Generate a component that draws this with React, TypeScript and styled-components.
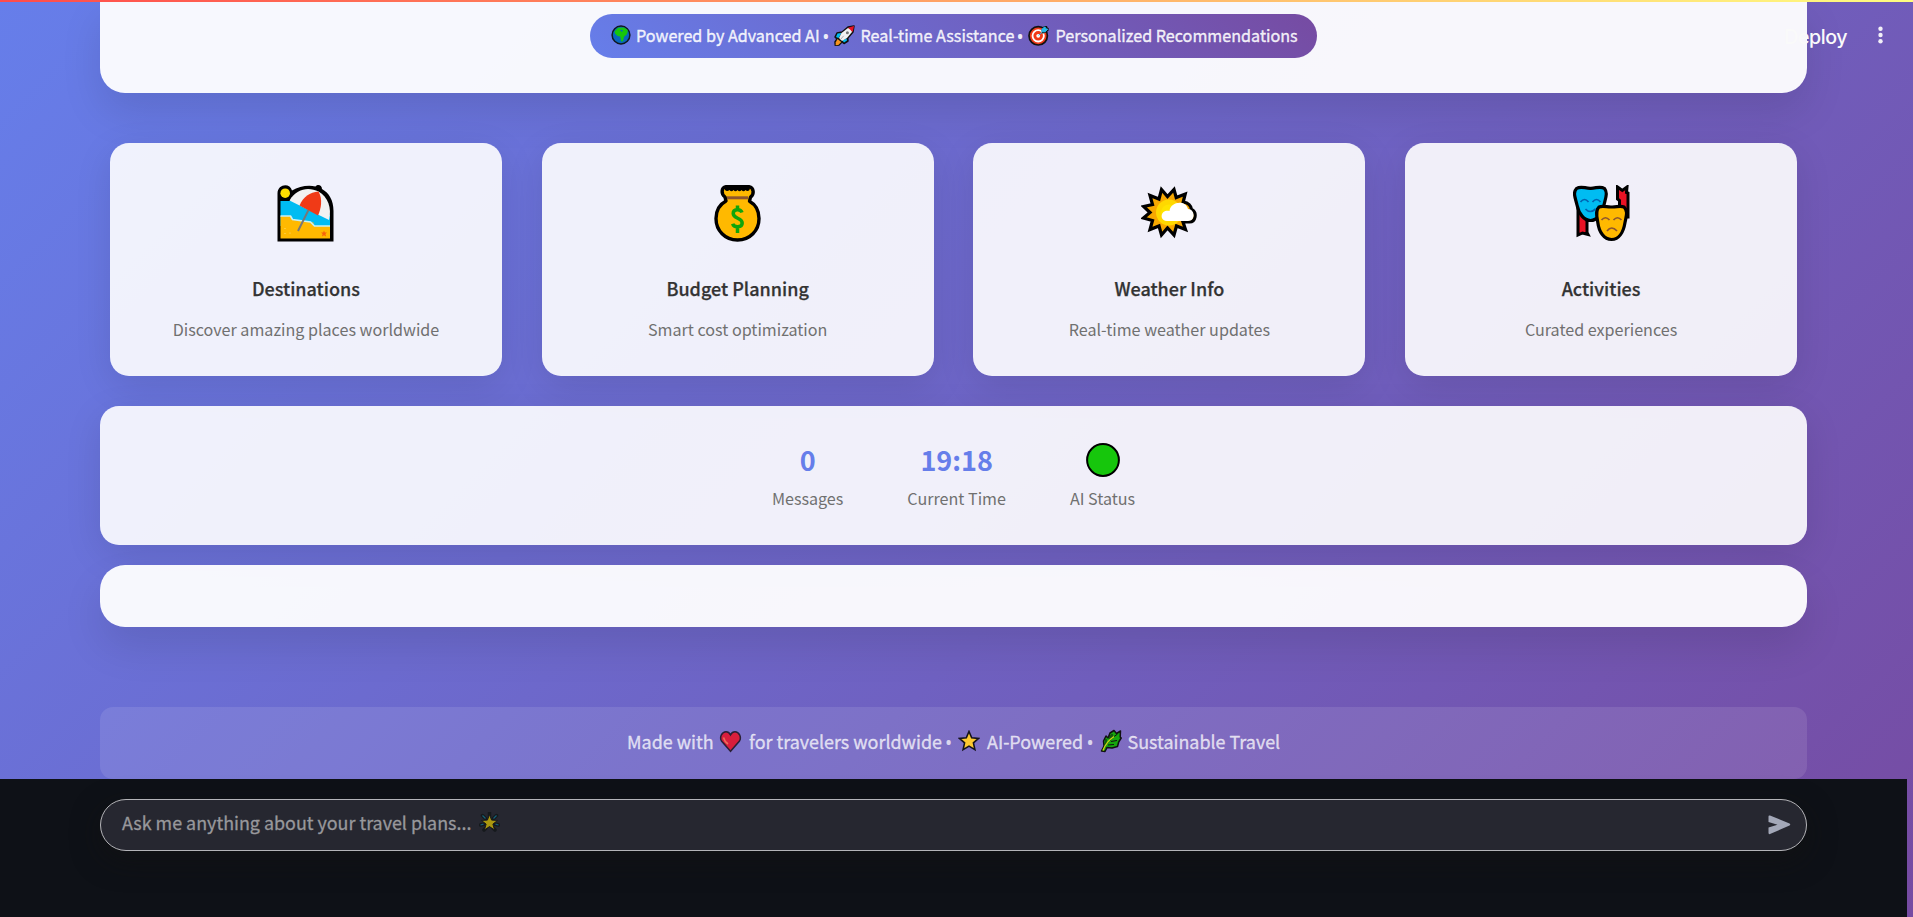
import React from "react";
import styled, { createGlobalStyle } from "styled-components";

const GlobalStyle = createGlobalStyle`
  html, body { margin: 0; padding: 0; overflow: hidden; }
  * { box-sizing: border-box; }
`;

const Page = styled.div`
  position: relative;
  height: 917px;
  overflow: hidden;
  display: flex;
  flex-direction: column;
  background: linear-gradient(135deg, #667eea 0%, #764ba2 100%);
  font-family: "Noto Sans CJK SC", "Noto Sans", sans-serif;
`;

const TopLine = styled.div`
  position: absolute;
  top: 0;
  left: 0;
  right: 0;
  height: 2px;
  background: linear-gradient(90deg, #ff4b4b, #fffd80);
  z-index: 2;
`;

const Toolbar = styled.div`
  position: absolute;
  top: 0;
  right: 29px;
  height: 70px;
  display: flex;
  align-items: center;
  gap: 30px;
  z-index: 1;
`;

const Deploy = styled.span`
  padding-top: 3px;
  font: 500 19.6px/24px Inter, sans-serif;
  letter-spacing: -0.45px;
  color: #fafafa;
`;

const Content = styled.main`
  flex: 0 0 779px;
  padding: 0 106px 0 100px;
  display: flex;
  flex-direction: column;
  overflow: hidden;
`;

const Hero = styled.section`
  flex: 0 0 92.5px;
  padding-top: 13.5px;
  display: flex;
  justify-content: center;
  align-items: flex-start;
  background: rgba(255, 255, 255, 0.95);
  border-radius: 0 0 25px 25px;
  box-shadow: 0 20px 40px rgba(0, 0, 0, 0.1);
`;

const Line = styled.span<{ $size: number; $stroke?: number }>`
  white-space: pre;
  font-size: ${(p) => p.$size}px;
  -webkit-text-stroke: ${(p) => p.$stroke ?? 0}px currentColor;
`;

const Pill = styled.div`
  width: 727px;
  height: 44px;
  padding: 0 0 1px 21px;
  display: flex;
  align-items: center;
  border-radius: 22px;
  color: rgba(255, 255, 255, 0.88);
  background: linear-gradient(45deg, #667eea, #764ba2);
`;

const Slot = styled.span<{ $w: number; $l?: number; $up?: number }>`
  flex: 0 0 ${(p) => p.$w}px;
  min-width: 0;
  margin-left: ${(p) => p.$l ?? 0}px;
  padding-bottom: ${(p) => p.$up ?? 0}px;
  display: flex;
`;

const Bullet = styled.span<{ $w: number }>`
  flex: 0 0 ${(p) => p.$w}px;
  min-width: 0;
  padding-top: 4px;
  display: flex;
  justify-content: center;
  font: 19px/24px "Noto Sans", sans-serif;
`;

const Features = styled.section`
  flex: 0 0 233px;
  margin: 50px 10px 30.5px;
  display: grid;
  grid-template-columns: repeat(4, 1fr);
  gap: 39.8px;
`;

const Card = styled.article`
  padding-top: 42px;
  display: flex;
  flex-direction: column;
  align-items: center;
  background: rgba(255, 255, 255, 0.9);
  border-radius: 19px;
  box-shadow: 0 10px 37px rgba(0, 0, 0, 0.1);
  svg { flex: 0 0 57px; }
`;

const CardTitle = styled.h3`
  margin: 32px 0 0;
  height: 28px;
  font-weight: 500;
  line-height: 28px;
  color: #333;
`;

const CardText = styled.p`
  margin: 14px 0 0;
  line-height: 27px;
  color: #707070;
`;

const Stats = styled.section`
  flex: 0 0 139px;
  padding-top: 37px;
  display: flex;
  justify-content: center;
  gap: 64px;
  background: rgba(255, 255, 255, 0.9);
  border-radius: 19px;
  box-shadow: 0 10px 37px rgba(0, 0, 0, 0.1);
`;

const Stat = styled.div`
  display: flex;
  flex-direction: column;
  align-items: center;
`;

const StatValue = styled.div`
  height: 34px;
  line-height: 34px;
  font-weight: 700;
  color: #667eea;
`;

const StatLabel = styled.div`
  margin-top: 8px;
  line-height: 26px;
  color: #707070;
`;

const Chat = styled.section`
  flex: 0 0 62px;
  margin-top: 20px;
  background: rgba(255, 255, 255, 0.95);
  border-radius: 25px;
  box-shadow: 0 20px 40px rgba(0, 0, 0, 0.1);
`;

const Footer = styled.footer`
  flex: 0 0 71.5px;
  margin-top: 80px;
  padding: 0 0 3px 527px;
  display: flex;
  align-items: center;
  color: rgba(255, 255, 255, 0.72);
  background: rgba(255, 255, 255, 0.1);
  border-radius: 13px;
`;

const Bottom = styled.div`
  flex: 1;
  margin-right: 6px;
  padding: 19.5px 100px 0;
  background: #0e1117;
`;

const InputBox = styled.div`
  height: 52px;
  padding: 0 15px 0 21px;
  display: flex;
  align-items: center;
  border: 1.5px solid #b4b4b8;
  border-radius: 26px;
  background: #262730;
  color: #98989c;
  box-shadow: 0 9px 28px rgba(20, 18, 16, 0.5);
`;

const Spacer = styled.span`
  flex: 1;
`;

const Globe = () => (
  <svg width="20" height="20" viewBox="0 0 20 20">
    <circle cx="10" cy="10" r="8.9" fill="#0866bd" stroke="#101820" strokeWidth="1.5" />
    <path d="M3.500 6.500 7 2.800l6-.3 3.800 2.500-.3 2.800-1 2-2.500 2-1 4.500-1.800.2-1-5-2.700-.5L4 8.500z" fill="#16c60c" />
    <path d="m9.500 5 2.200.3-.8 1.400z" stroke="#0866bd" fill="#0866bd" strokeWidth=".5" />
  </svg>
);

const Rocket = () => (
  <svg width="21" height="21" viewBox="0 0 21 21" strokeLinejoin="round">
    <path d="M20 1 14 2 8 7 3 8 1 12l2 2-2 3 .3 3.4L5 20l3-3 2 1.5L14 16l-.2-3L19 7z" fill="#111" stroke="#111" strokeWidth="1.5" />
    <path d="m3.5 8.5 4-.5-3 5-2.5-1zM12.5 13.5l.5 2-3 2-1.5-2z" fill="#00bcf2" />
    <path d="M14 3 7.5 8 5 13l3 3 5-3 5-6-1-3z" fill="#f2f2f2" />
    <path d="m14 2.7 6-1.6-1.3 6z" fill="#e81224" />
    <path d="m3.5 14 3.8 3-3 3-2.7.2.2-3z" fill="#f7941d" />
    <circle cx="13.4" cy="7.8" r="1.5" fill="#777" />
    <path d="m6.5 14.5 3.2-3.7" stroke="#ababab" />
  </svg>
);

const Target = () => (
  <svg width="21" height="21" viewBox="0 0 21 21">
    <circle cx="10.2" cy="10.8" r="9.2" fill="#f03a17" stroke="#111" strokeWidth="1.7" />
    <circle cx="10.2" cy="10.8" r="5.7" fill="none" stroke="#fff" strokeWidth="1.8" />
    <circle cx="10.2" cy="10.8" r="1.9" fill="#fff" />
    <path d="M16 1h3l.5 1.5 1.3.7-.3 2.6-3.3 2-2.7 1-1-2.800L14 4z" fill="#111" />
    <path d="m17 1.800.7 1.900 2 .5-2.700 2.700-2.800-.2-.4-2.400zM14.200 7l-3.600 3.400" fill="#25b8e8" stroke="#25b8e8" />
  </svg>
);

const Beach = () => (
  <svg width="57" height="57" viewBox="0 0 57 57">
    <path d="M.5 56.5V8.5C.5-1 13-2.5 15 5.5 22 1.5 31-.5 38.5 1.5 40-1 45-.5 45 4 52 8 56.5 15 56.5 26v30.5z" fill="#000" />
    <circle cx="8.2" cy="8.2" r="4.8" fill="#ffde00" />
    <path d="M3.5 16h12L53 30v11H3.5z" fill="#00bcf2" />
    <path d="M3.5 31h11v3.5l22 3v3.5H53v12.5H3.5z" fill="#ffb900" />
    <path d="M3.5 31h10l2 3.5 18 2.5 4 4H53" fill="none" stroke="#c8f0f4" strokeWidth="1.7" />
    <path d="M12.5 15.5C20 3 32 2 41.5 6.5 51 12 55 23 52 35z" fill="#f2f2f2" />
    <path d="M22.5 20.5C26 12 33 7 41.5 6.5 46 14 44 24 41 30.5z" fill="#f03a17" />
    <path d="M31.5 25 21 46" stroke="#777" strokeWidth="2" />
    <path d="m47 45.5.8 2H50l-1.600 1.600.7 2.400-2.100-1.300-2.100 1.300.7-2.400-1.600-1.600h2.200z" fill="#f7630c" />
    <circle cx="8" cy="43.5" r=".6" fill="#ffe27a" />
    <circle cx="13" cy="48" r=".6" fill="#ffe27a" />
    <circle cx="8" cy="48.5" r=".6" fill="#ffe27a" />
  </svg>
);

const MoneyBag = () => (
  <svg width="57" height="57" viewBox="0 0 57 57" strokeLinejoin="round">
    <path d="M17 1.700h23c5 1 5.500 7.500 1.500 10.500l-1 4C46.500 19.500 50 26 50 33.500 50 45.500 41 55 28.500 55S7 45.500 7 33.500C7 26 10.500 19.500 17 16l-1-4C12 9 12 2.700 17 1.700z" fill="#ffb900" stroke="#000" strokeWidth="3.4" />
    <path d="M16 2h25l-.5 3q-2 2.200-4 0-2 2.500-4 0-2 2.500-4 0-2 2.500-4 0-2 2.500-4 0-2.500 2-4.500 0z" fill="#000" />
    <path d="M18 12.8h21" stroke="#8e562e" strokeWidth="3" />
    <path d="M33 27.5c-1.500-4-8.800-3.600-8.800 1 0 5.300 9 4.200 9 9.500 0 4.800-8.200 5.200-9.500.8M28.500 20.500v5m0 17.5v5" fill="none" stroke="#10a50b" strokeWidth="3.5" />
  </svg>
);

const SunCloud = () => (
  <svg width="57" height="57" viewBox="0 0 57 57">
    <path d="m20.5 4.500 6 7 6.500-7 2.200 8 9-3.500-2 8C48 18 50 20.500 50.500 24.500c6 3 4 12.500-2 12.500H42l2.500 7.500-9-3.500-2.500 9-6.500-7-6 7-2.500-9-9 3.500 2.500-9-9-2.500 6.500-5.500-6.500-6 9-2-2.500-9 9 3.500z" fill="#f7a800" stroke="#000" strokeWidth="3.2" />
    <circle cx="28" cy="27.5" r="13" fill="#ffd800" />
    <circle cx="28" cy="27.5" r="8" fill="#fff000" opacity=".5" />
    <path d="M26 36c-5.500 0-7-6-3.500-9 1.500-1.300 4-1.700 6-1 1-9.500 16-11.500 18.500-2 7 0 8 12 0 12z" fill="#fff" />
  </svg>
);

const Masks = () => (
  <svg width="57" height="57" viewBox="0 0 57 57" strokeLinejoin="miter">
    <path d="M5 20h9v27.500l1 2-5.500-1.500-4.500 2zM44.500 2l4.800 3.500L54 2l-.5 5.500 1.500.5v24h-8.500V15.500L44.500 14z" fill="#e81224" stroke="#000" strokeWidth="3" />
    <path d="M3.500 3.500C8 .5 12 3.500 17.500 3.300 23 3.500 27 .5 31.500 3.500 35 8 32.500 13 31 20 29 29 24 35.500 17.500 35.500S6 29 4 20C2.500 13-.5 8 3.500 3.500z" fill="#00bcf2" stroke="#000" strokeWidth="3.2" />
    <path d="M26 22c4-1.800 8 .3 12.500 0 5 .3 8.500-1.800 12.500 0 4.500 4 2 10 1 15.500C50.500 47 46 54.500 38.500 54.500S26 47 24.800 37.500C24 32 22 25.500 26 22z" fill="#ffb900" stroke="#000" strokeWidth="3.2" />
    <path d="M7.500 17q4-5 8 0M19.5 17q4-5 8 0M12.500 24q4.500 5 10 0" fill="none" stroke="#0063b1" strokeWidth="1.7" />
    <path d="M28.5 35q4-4.500 8 0M40.500 35q4-4.500 8 0M34 46q4.500-6 10 0" fill="none" stroke="#8e562e" strokeWidth="1.7" />
  </svg>
);

const Online = () => (
  <svg width="34" height="34" viewBox="0 0 34 34">
    <circle cx="17" cy="17" r="15.9" fill="#16c60c" stroke="#000" strokeWidth="2" />
  </svg>
);

const Heart = () => (
  <svg width="23" height="24" viewBox="0 0 23 24">
    <path d="M11.5 22.300 2.500 12C.2 8 3 2.800 7 2.800c2.300 0 3.700 1.500 4.500 3 .8-1.500 2.200-3 4.500-3 4 0 6.800 5.200 4.500 9.200z" fill="#d91e3c" stroke="#2a2036" strokeWidth="1.5" />
    <path d="M4.500 8.500q1 4 4.500 6.500" fill="none" stroke="#ee705a" strokeWidth="1.6" />
  </svg>
);

const Star = () => (
  <svg width="22" height="22" viewBox="0 0 22 22">
    <path d="m11 1.500 2.700 6.300 6.800.6-5.100 4.500 1.500 6.700-5.900-3.500-5.900 3.500 1.500-6.700-5.100-4.500 6.800-.6z" fill="#fdc830" stroke="#15131c" strokeWidth="1.6" />
  </svg>
);

const Leaf = () => (
  <svg width="22" height="24" viewBox="0 0 22 24" strokeLinejoin="round">
    <path d="m14 1.5 2.5 3L20.500 2l-.3 6 1 1-2.500 4-1.200 4.500-5.500 1.500-5-.5-2 4L1.500 22 4 17l-.5-5L6 7l2 2 2-5z" fill="#16a70d" stroke="#111" strokeWidth="1.5" />
    <path d="M3 21.500Q7 12 17.500 5M6 16V10m4 2V6m2 4V5M8 16l6-.5M11 12.500l6-1" fill="none" stroke="#111" strokeWidth="1" />
    <path d="M3 21.500Q6 13 14 7.500" fill="none" stroke="#c4dc12" strokeWidth="1.5" />
  </svg>
);

const GlowStar = () => (
  <svg width="21" height="21" viewBox="0 0 21 21">
    <path d="m3.5 3.5 3 3m11-3-3 3M1.500 13l4-1m14 1-4-1M10.500 1v4M5 18l2-2m9 2-2-2" stroke="#15191c" strokeWidth="3.5" strokeLinecap="round" />
    <path d="m3.5 3.5 3 3m11-3-3 3M1.500 13l3-.8m15 .8-3-.8" stroke="#146078" strokeWidth="1.2" />
    <path d="m10.500 2.500 2.100 5.600 6 .3-4.700 3.700 1.700 5.900-5.100-3.400L5.400 18l1.700-5.900-4.700-3.700 6-.3z" fill="#aa980f" stroke="#17191b" strokeWidth="1" />
  </svg>
);

const Dots = () => (
  <svg width="7" height="18" viewBox="0 0 7 18" fill="#f2f0f8">
    <circle cx="3.5" cy="2.7" r="2.2" />
    <circle cx="3.5" cy="9" r="2.2" />
    <circle cx="3.5" cy="15.3" r="2.2" />
  </svg>
);

const Send = () => (
  <svg width="23" height="20" viewBox="0 0 23 20">
    <path d="M.5 1.500Q.5 0 2 .5l19.500 8q1.500 1 0 2L2 19Q.5 19.500.5 18V12.500L9.500 9.800.5 7z" fill="#a3a8b8" />
  </svg>
);

const features = [
  { icon: <Beach />, title: "Destinations", text: "Discover amazing places worldwide" },
  { icon: <MoneyBag />, title: "Budget Planning", text: "Smart cost optimization" },
  { icon: <SunCloud />, title: "Weather Info", text: "Real-time weather updates" },
  { icon: <Masks />, title: "Activities", text: "Curated experiences" },
];

const stats = [
  { value: <Line $size={27}>0</Line>, label: "Messages" },
  { value: <Line $size={27}>19:18</Line>, label: "Current Time" },
  { value: <Online />, label: "AI Status" },
];

const PillText = ({ children }: { children: string }) => (
  <Line $size={16.15} $stroke={0.4}>{children}</Line>
);

const FooterText = ({ children }: { children: string }) => (
  <Line $size={17.93} $stroke={0.35}>{children}</Line>
);

export default function App() {
  return (
    <Page>
      <GlobalStyle />
      <TopLine />
      <Toolbar>
        <Deploy>Deploy</Deploy>
        <Dots />
      </Toolbar>
      <Content>
        <Hero>
          <Pill>
            <Slot $w={25}><Globe /></Slot>
            <Slot $w={182.8}><PillText>Powered by Advanced AI</PillText></Slot>
            <Bullet $w={14}>•</Bullet>
            <Slot $w={26.2} $l={1.5}><Rocket /></Slot>
            <Slot $w={153}><PillText>Real-time Assistance</PillText></Slot>
            <Bullet $w={13}>•</Bullet>
            <Slot $w={27} $l={2}><Target /></Slot>
            <PillText>Personalized Recommendations</PillText>
          </Pill>
        </Hero>
        <Features>
          {features.map((f) => (
            <Card key={f.title}>
              {f.icon}
              <CardTitle><Line $size={18} $stroke={0.25}>{f.title}</Line></CardTitle>
              <CardText><Line $size={16.13}>{f.text}</Line></CardText>
            </Card>
          ))}
        </Features>
        <Stats>
          {stats.map((s) => (
            <Stat key={s.label}>
              <StatValue>{s.value}</StatValue>
              <StatLabel><Line $size={16.13}>{s.label}</Line></StatLabel>
            </Stat>
          ))}
        </Stats>
        <Chat />
        <Footer>
          <Slot $w={92}><FooterText>Made with</FooterText></Slot>
          <Slot $w={30}><Heart /></Slot>
          <Slot $w={192.5}><FooterText>for travelers worldwide</FooterText></Slot>
          <Bullet $w={14}>•</Bullet>
          <Slot $w={29} $l={2.5}><Star /></Slot>
          <Slot $w={97}><FooterText>AI-Powered</FooterText></Slot>
          <Bullet $w={12}>•</Bullet>
          <Slot $w={28} $l={3.5}><Leaf /></Slot>
          <FooterText>Sustainable Travel</FooterText>
        </Footer>
      </Content>
      <Bottom>
        <InputBox>
          <Slot $w={357} $up={5}><Line $size={17.9} $stroke={0.3}>Ask me anything about your travel plans...</Line></Slot>
          <Slot $w={21} $up={4}><GlowStar /></Slot>
          <Spacer />
          <Send />
        </InputBox>
      </Bottom>
    </Page>
  );
}
